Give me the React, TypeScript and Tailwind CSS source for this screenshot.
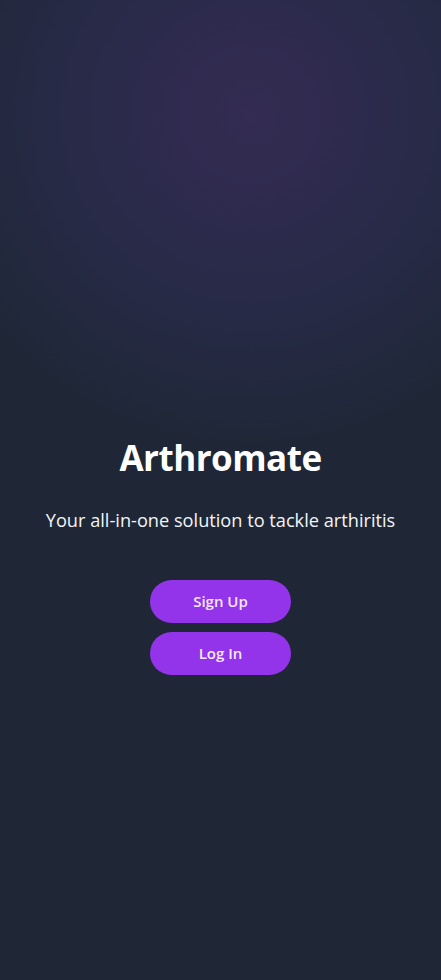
export default function App() {
  return (
    <main
      className="relative min-h-[980px] w-full overflow-hidden bg-[#1f2737] text-white"
      style={{ fontFamily: '"Open Sans", "Noto Sans", sans-serif' }}
    >
      <div className="pointer-events-none absolute inset-0 bg-[radial-gradient(circle_at_250px_115px,#342c52_0px,#2d2a4d_110px,#262a45_210px,rgba(31,39,55,0)_330px)]" />
      <div className="relative flex flex-col items-center pt-[436px]">
        <h1 className="text-[35px] leading-[44px] font-bold tracking-[-0.5px]">Arthromate</h1>
        <p className="mt-[27px] text-[18.2px] leading-[26px] text-gray-100">
          Your all-in-one solution to tackle arthiritis
        </p>
        <div className="mt-[47px] flex flex-col gap-[9px]">
          <button className="h-[43px] w-[141px] rounded-full bg-[#9333ea] text-[15px] font-semibold text-[#f5e9ff]">
            Sign Up
          </button>
          <button className="h-[43px] w-[141px] rounded-full bg-[#9333ea] text-[15px] font-semibold text-[#f5e9ff]">
            Log In
          </button>
        </div>
      </div>
    </main>
  );
}
